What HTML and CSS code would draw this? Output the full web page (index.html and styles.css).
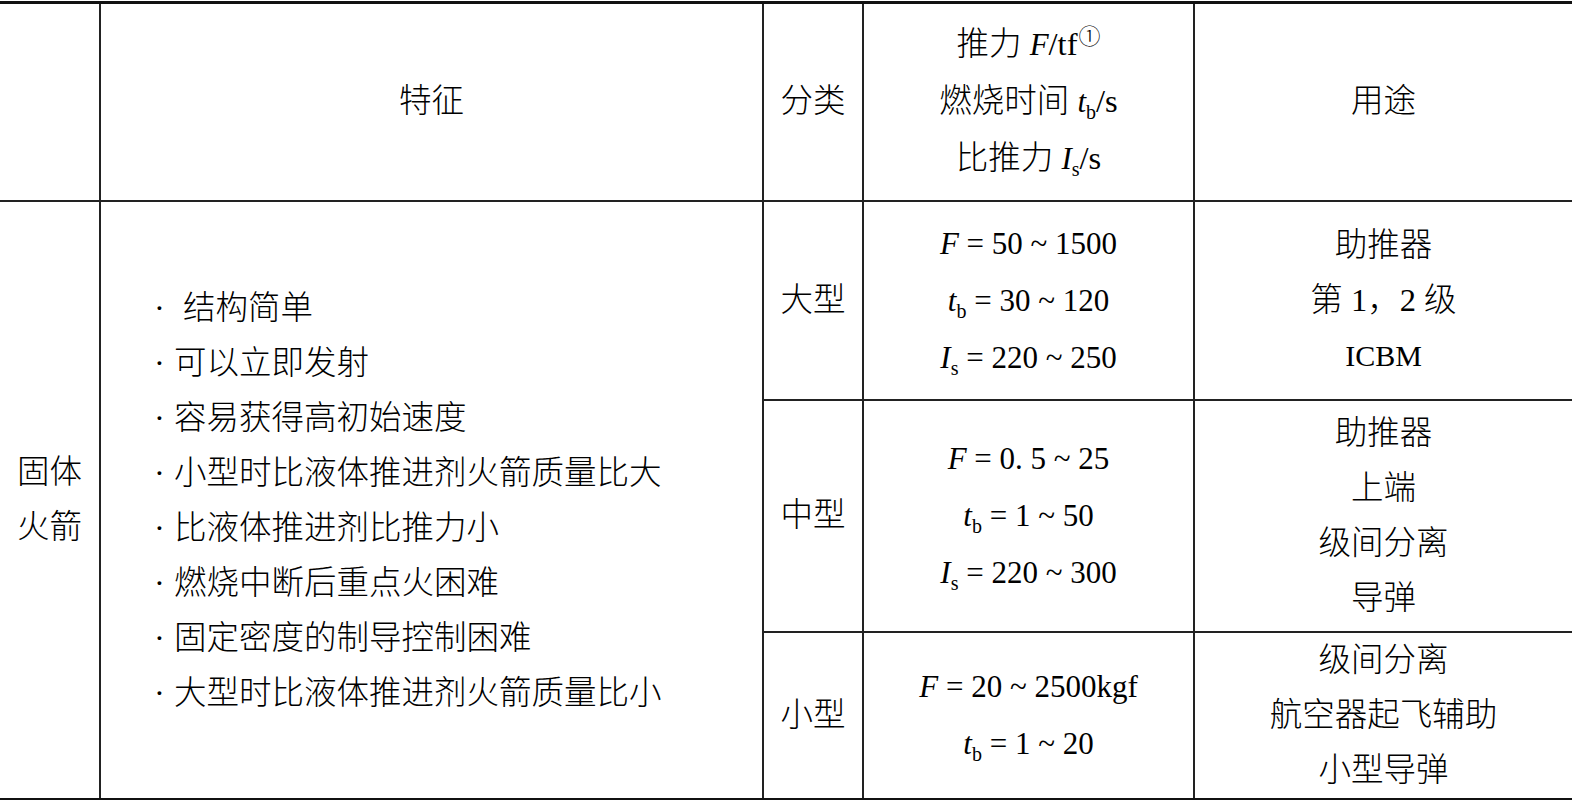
FILE: index.html
```html
<!DOCTYPE html>
<html lang="zh-CN">
<head>
<meta charset="utf-8">
<title>固体火箭</title>
<link rel="stylesheet" href="styles.css">
</head>
<body>
<table class="spec">
  <colgroup>
    <col class="c1"><col class="c2"><col class="c3"><col class="c4"><col class="c5">
  </colgroup>
  <tr class="head">
    <td></td>
    <td>特征</td>
    <td>分类</td>
    <td class="hdr">
      <div class="ln">推力 <i>F</i>/tf<sup class="circ">①</sup></div>
      <div class="ln">燃烧时间 <i>t</i><sub>b</sub>/s</div>
      <div class="ln">比推力 <i>I</i><sub>s</sub>/s</div>
    </td>
    <td>用途</td>
  </tr>
  <tr class="r1">
    <td rowspan="3" class="name"><div class="ln">固体</div><div class="ln">火箭</div></td>
    <td rowspan="3" class="feat">
      <ul class="list">
        <li class="first">·  结构简单</li>
        <li>· 可以立即发射</li>
        <li>· 容易获得高初始速度</li>
        <li>· 小型时比液体推进剂火箭质量比大</li>
        <li>· 比液体推进剂比推力小</li>
        <li>· 燃烧中断后重点火困难</li>
        <li>· 固定密度的制导控制困难</li>
        <li>· 大型时比液体推进剂火箭质量比小</li>
      </ul>
    </td>
    <td>大型</td>
    <td class="math">
      <div class="ln"><i>F</i> = 50 ~ 1500</div>
      <div class="ln"><i>t</i><sub>b</sub> = 30 ~ 120</div>
      <div class="ln"><i>I</i><sub>s</sub> = 220 ~ 250</div>
    </td>
    <td>
      <div class="ln">助推器</div>
      <div class="ln">第 1，2 级</div>
      <div class="ln lat">ICBM</div>
    </td>
  </tr>
  <tr class="r2">
    <td>中型</td>
    <td class="math">
      <div class="ln"><i>F</i> = 0. 5 ~ 25</div>
      <div class="ln"><i>t</i><sub>b</sub> = 1 ~ 50</div>
      <div class="ln"><i>I</i><sub>s</sub> = 220 ~ 300</div>
    </td>
    <td>
      <div class="ln">助推器</div>
      <div class="ln">上端</div>
      <div class="ln">级间分离</div>
      <div class="ln">导弹</div>
    </td>
  </tr>
  <tr class="r3">
    <td>小型</td>
    <td class="math">
      <div class="ln"><i>F</i> = 20 ~ 2500kgf</div>
      <div class="ln"><i>t</i><sub>b</sub> = 1 ~ 20</div>
    </td>
    <td>
      <div class="ln">级间分离</div>
      <div class="ln">航空器起飞辅助</div>
      <div class="ln">小型导弹</div>
    </td>
  </tr>
</table>
</body>
</html>
```
FILE: styles.css
```css
html, body {
  margin: 0;
  padding: 0;
  background: #fff;
}
body {
  width: 1572px;
  height: 800px;
  overflow: hidden;
  font-family: "Liberation Serif", "Noto Sans CJK SC", serif;
  color: #000;
}
.spec {
  margin-top: 1px;
  width: 1572px;
  border-collapse: collapse;
  table-layout: fixed;
  border-top: 3px solid #111;
  border-bottom: 4px solid #111;
}
.c1 { width: 100px; }
.c2 { width: 663px; }
.c3 { width: 100px; }
.c4 { width: 331px; }
.c5 { width: 378px; }
.spec td {
  border: 2px solid #222;
  padding: 0;
  text-align: center;
  vertical-align: middle;
  font-family: "Liberation Serif", "Noto Sans CJK SC", serif;
  font-size: 32.5px;
  line-height: 55px;
  font-weight: 300;
}
.spec tr td:first-child { border-left: none; }
.spec tr td:last-child { border-right: none; }
.spec tr.head td { border-top: none; }
.spec tr.r3 td, .spec td[rowspan] { border-bottom: none; }
.head { height: 198px; }
.r1 { height: 199px; }
.r2 { height: 232px; }
.r3 { height: 163px; }
.ln { white-space: nowrap; }
.spec td.hdr .ln { line-height: 56px; }
.spec td.math {
  font-size: 31px;
  font-weight: 400;
}
.spec td.math .ln { line-height: 57px; }
i {
  font-style: italic;
  font-size: 31px;
}
sub {
  font-size: 20px;
  vertical-align: -7px;
  line-height: 0;
}
.circ {
  font-family: "Noto Sans CJK SC", sans-serif;
  font-size: 22px;
  vertical-align: 11px;
  line-height: 0;
  margin-left: 1px;
}
.spec td .lat {
  font-weight: 400;
  font-size: 30px;
}
.spec td.feat { text-align: left; }
.list {
  list-style: none;
  margin: 2px 0 0 0;
  padding: 0 0 0 53px;
}
.list li {
  white-space: pre;
  word-spacing: 1px;
  line-height: 55px;
}
```
